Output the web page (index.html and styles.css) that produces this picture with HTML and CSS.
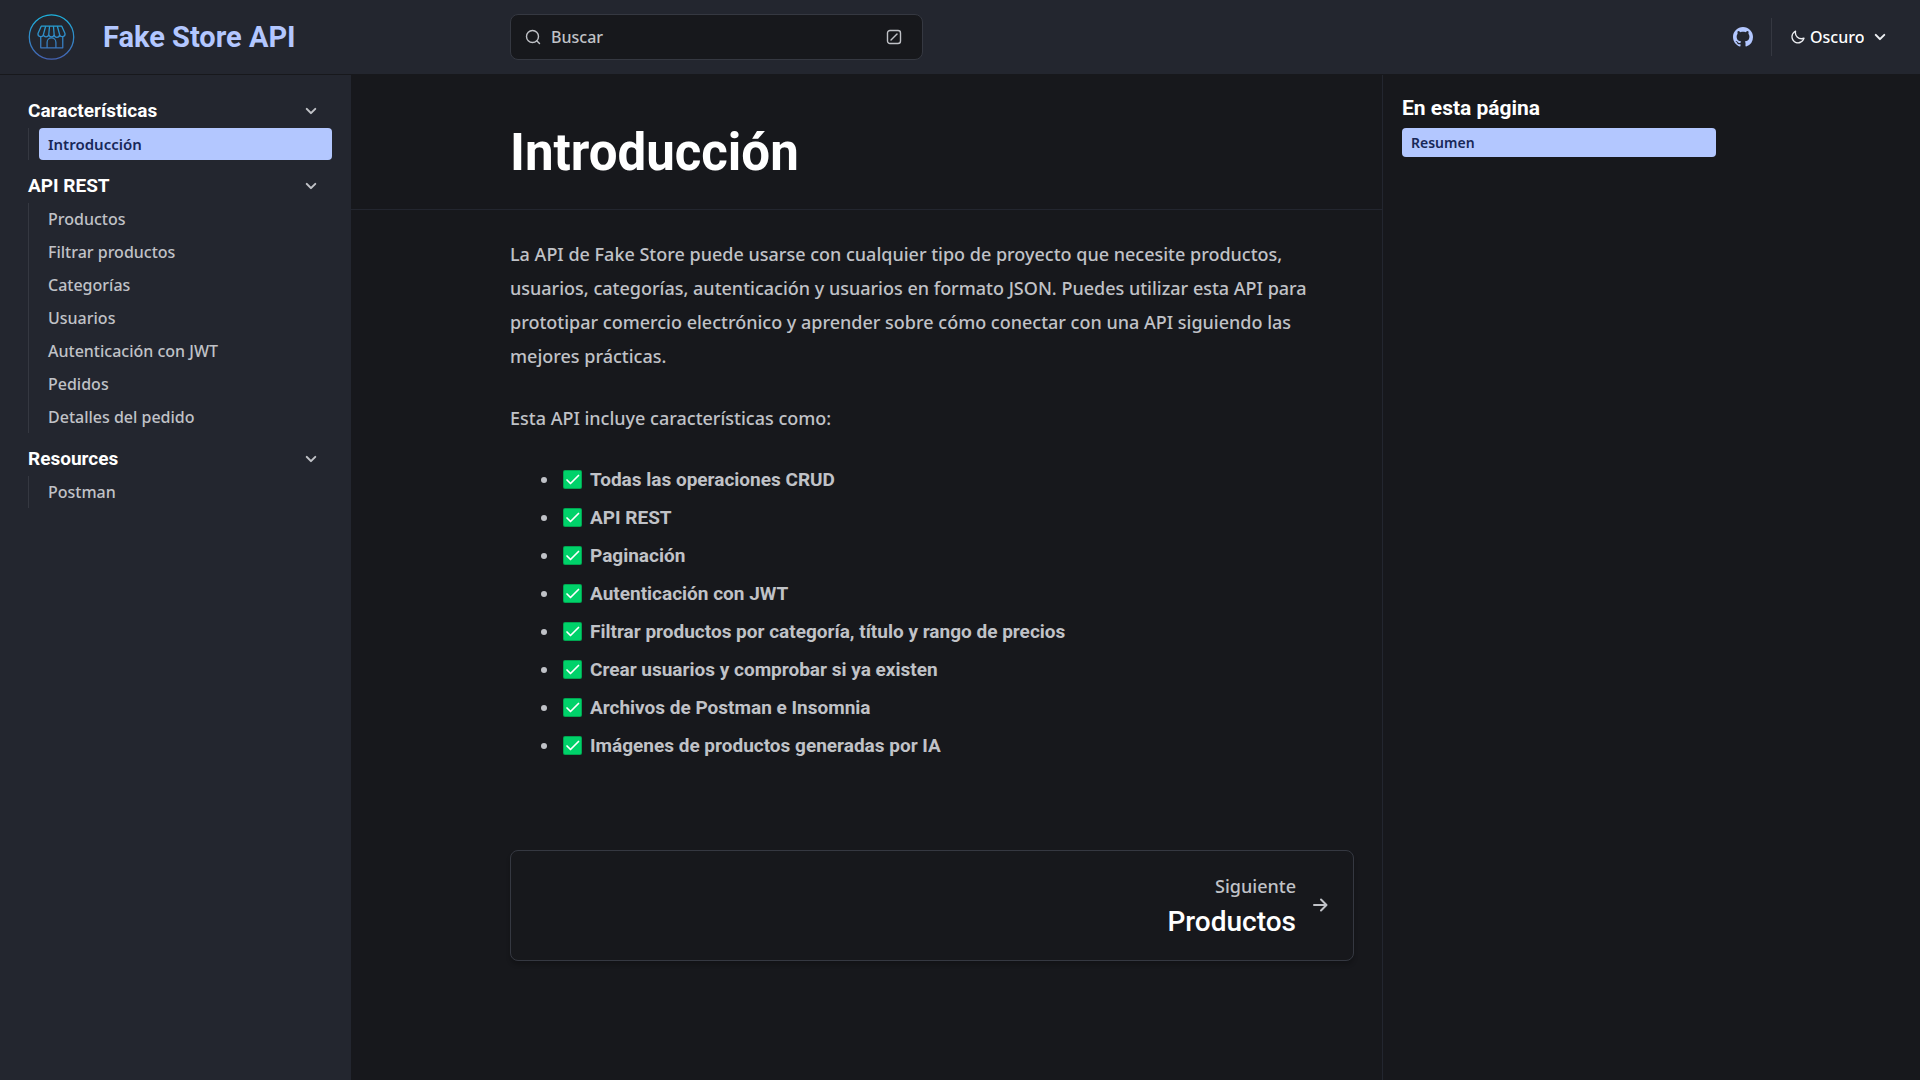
FILE: index.html
```html
<!DOCTYPE html>
<html lang="es">
<head>
<meta charset="utf-8">
<meta name="viewport" content="width=device-width, initial-scale=1">
<title>Introducción | Fake Store API</title>
<link rel="stylesheet" href="styles.css">
</head>
<body>
<svg class="sprite" aria-hidden="true">
  <symbol id="chevron" viewBox="0 0 24 24"><path d="M17 9.2a1 1 0 0 0-1.4 0L12 12.7 8.5 9.2A1 1 0 0 0 7 10.6l4.2 4.2a1 1 0 0 0 1.5 0l4.3-4.2a1 1 0 0 0 0-1.4Z"/></symbol>
  <symbol id="check" viewBox="0 0 19 19"><rect width="19" height="19" rx="2" fill="#00a651"/><rect x="1" y="1" width="17" height="17" rx="1" fill="#00d26a"/><path d="M4 10l3.500 3.500L15.500 5.500" fill="none" stroke="#fff" stroke-width="1.700" stroke-linecap="round" stroke-linejoin="round"/></symbol>
</svg>

<header class="header">
  <a class="site-title" href="#">
    <svg class="logo" viewBox="0 0 47 47" fill="none" aria-hidden="true">
      <defs><linearGradient id="logo-stroke" gradientUnits="userSpaceOnUse" x1="0" y1="0" x2="0" y2="47"><stop stop-color="#1cb5e0"/><stop offset="1" stop-color="#4560b0"/></linearGradient></defs>
      <g stroke="url(#logo-stroke)" stroke-width="1.300" stroke-linejoin="round">
        <circle cx="23.500" cy="23.500" r="22.700"/>
        <path d="M13 12.500h21l3.300 7.500a2.800 2.800 0 0 1-5.500 1 2.800 2.800 0 0 1-5.600 0 2.800 2.800 0 0 1-5.500 0 2.800 2.800 0 0 1-5.500 0 2.800 2.800 0 0 1-5.500-1L13 12.500Z"/>
        <path d="M17.500 12.500L15.200 21M21.500 12.500L20.700 21M25.500 12.500L26.200 21M29.500 12.500L31.800 21"/>
        <path d="M12.500 23v11.500H35V23M19 34.500V29a4.500 4.500 0 0 1 9 0v5.500"/>
      </g>
    </svg>
    <span>Fake Store API</span>
  </a>
  <button class="search" type="button">
    <svg width="16" height="16" viewBox="0 0 16 16" fill="none" stroke="currentColor" stroke-width="1.400" stroke-linecap="round" aria-hidden="true"><circle cx="7.500" cy="7.500" r="6"/><path d="M12 12l2.500 2.500"/></svg>
    <span class="search-label">Buscar</span>
    <svg width="16" height="16" viewBox="0 0 16 16" fill="none" stroke="currentColor" stroke-width="1.400" stroke-linecap="round" aria-hidden="true"><rect x="1.500" y="1.500" width="13" height="13" rx="2.500"/><path d="M5 11l6-6"/></svg>
  </button>
  <div class="header-end">
    <a class="github" href="#" aria-label="GitHub">
      <svg width="20" height="20" viewBox="0 0 16 16" fill="currentColor" aria-hidden="true"><path d="M8 0C3.580 0 0 3.580 0 8c0 3.540 2.290 6.530 5.470 7.590.4.070.55-.17.55-.38 0-.19-.01-.82-.01-1.490-2.010.37-2.530-.49-2.690-.94-.09-.23-.48-.94-.82-1.130-.28-.15-.68-.52-.01-.53.63-.01 1.080.58 1.230.82.72 1.210 1.870.87 2.330.66.07-.52.28-.87.51-1.070-1.780-.2-3.640-.89-3.640-3.950 0-.87.31-1.590.82-2.150-.08-.2-.36-1.020.08-2.120 0 0 .67-.21 2.200.82.640-.18 1.320-.27 2-.27s1.360.09 2 .27c1.530-1.040 2.200-.82 2.200-.82.44 1.100.16 1.920.08 2.120.51.56.82 1.270.82 2.150 0 3.070-1.870 3.750-3.650 3.950.29.25.54.73.54 1.480 0 1.070-.01 1.930-.01 2.200 0 .21.15.46.55.38A8.010 8.010 0 0 0 16 8c0-4.420-3.580-8-8-8Z"/></svg>
    </a>
    <label class="theme">
      <svg width="16" height="16" viewBox="0 0 24 24" fill="currentColor" aria-hidden="true"><path d="M21.640 13a1 1 0 0 0-1.050-.14 8.050 8.050 0 0 1-3.370.73 8.150 8.150 0 0 1-8.140-8.100 8.590 8.590 0 0 1 .25-2A1 1 0 0 0 8 2.360a10.140 10.140 0 1 0 14 11.690 1 1 0 0 0-.36-1.050Zm-9.500 6.690A8.140 8.140 0 0 1 7.080 5.220v.27a10.150 10.150 0 0 0 10.140 10.140 9.790 9.790 0 0 0 2.100-.22 8.110 8.110 0 0 1-7.180 4.320v-.04Z"/></svg>
      <select aria-label="Selecciona tema"><option>Oscuro</option><option>Claro</option><option>Automático</option></select>
      <svg class="chevron" aria-hidden="true"><use href="#chevron"/></svg>
    </label>
  </div>
</header>

<div class="layout">
  <nav class="sidebar" aria-label="Principal">
    <details open>
      <summary>Características<svg class="chevron" aria-hidden="true"><use href="#chevron"/></svg></summary>
      <ul><li><a class="current" href="#" aria-current="page">Introducción</a></li></ul>
    </details>
    <details open>
      <summary>API REST<svg class="chevron" aria-hidden="true"><use href="#chevron"/></svg></summary>
      <ul>
        <li><a href="#">Productos</a></li>
        <li><a href="#">Filtrar productos</a></li>
        <li><a href="#">Categorías</a></li>
        <li><a href="#">Usuarios</a></li>
        <li><a href="#">Autenticación con JWT</a></li>
        <li><a href="#">Pedidos</a></li>
        <li><a href="#">Detalles del pedido</a></li>
      </ul>
    </details>
    <details open>
      <summary>Resources<svg class="chevron" aria-hidden="true"><use href="#chevron"/></svg></summary>
      <ul><li><a href="#">Postman</a></li></ul>
    </details>
  </nav>

  <main class="main">
    <div class="panel title-panel"><div class="content"><h1>Introducción</h1></div></div>
    <div class="panel">
      <div class="content">
        <p>La API de Fake Store puede usarse con cualquier tipo de proyecto que necesite productos, usuarios, categorías, autenticación y usuarios en formato JSON. Puedes utilizar esta API para prototipar comercio electrónico y aprender sobre cómo conectar con una API siguiendo las mejores prácticas.</p>
        <p>Esta API incluye características como:</p>
        <ul class="features">
          <li><svg class="check" aria-hidden="true"><use href="#check"/></svg>Todas las operaciones CRUD</li>
          <li><svg class="check" aria-hidden="true"><use href="#check"/></svg>API REST</li>
          <li><svg class="check" aria-hidden="true"><use href="#check"/></svg>Paginación</li>
          <li><svg class="check" aria-hidden="true"><use href="#check"/></svg>Autenticación con JWT</li>
          <li><svg class="check" aria-hidden="true"><use href="#check"/></svg>Filtrar productos por categoría, título y rango de precios</li>
          <li><svg class="check" aria-hidden="true"><use href="#check"/></svg>Crear usuarios y comprobar si ya existen</li>
          <li><svg class="check" aria-hidden="true"><use href="#check"/></svg>Archivos de Postman e Insomnia</li>
          <li><svg class="check" aria-hidden="true"><use href="#check"/></svg>Imágenes de productos generadas por IA</li>
        </ul>
        <a class="next" href="#" rel="next">
          <span class="next-text">Siguiente<span class="next-title">Productos</span></span>
          <svg width="16" height="16" viewBox="0 0 16 16" fill="none" stroke="currentColor" stroke-width="2" stroke-linecap="round" stroke-linejoin="round" aria-hidden="true"><path d="M2 8h12M9 2.500L14.500 8 9 13.500"/></svg>
        </a>
      </div>
    </div>
  </main>

  <aside class="toc">
    <h2>En esta página</h2>
    <a href="#" aria-current="true">Resumen</a>
  </aside>
</div>
</body>
</html>
```
FILE: styles.css
```css
:root {
  --bg: #17181c;
  --bg-nav: #23262f;
  --hairline: #23262f;
  --line: #353841;
  --text: #c0c2c7;
  --accent: #b3c7ff;
  --on-accent: #182758;
  --body-font: "Noto Sans", sans-serif;
  --heading-font: Roboto, "Noto Sans", sans-serif;
  --sidebar: 351px;
  --gutter: 28px;
}

* { box-sizing: border-box; }

body {
  margin: 0;
  min-height: 100vh;
  display: flex;
  flex-direction: column;
  background: var(--bg);
  color: var(--text);
  font: 500 18px/34px var(--body-font);
}

a { color: inherit; text-decoration: none; }
ul { margin: 0; padding: 0; list-style: none; }
h1, h2, p { margin: 0; }
svg { flex: none; }
.sprite { display: none; }
.chevron { width: 24px; height: 24px; fill: currentColor; }

.header {
  display: flex;
  align-items: center;
  padding: 14px var(--gutter);
  background: var(--bg-nav);
  border-bottom: 1px solid var(--bg);
}

.site-title {
  width: 482px;
  display: flex;
  align-items: center;
  gap: 28px;
  color: var(--accent);
  font: 700 29px/46px var(--heading-font);
}
.logo { width: 47px; height: 46px; }

.search {
  width: 413px;
  height: 46px;
  display: flex;
  align-items: center;
  gap: 10px;
  padding: 0 20px 0 14px;
  border: 1px solid var(--line);
  border-radius: 8px;
  background: var(--bg);
  color: var(--text);
  font: 500 16px/24px var(--body-font);
}
.search-label { flex: 1; text-align: left; }

.header-end {
  margin-left: auto;
  display: flex;
  align-items: center;
  gap: 18px;
}
.github { display: flex; color: var(--accent); }
.theme {
  height: 38px;
  display: flex;
  align-items: center;
  gap: 4px;
  padding-left: 18px;
  border-left: 1px solid var(--line);
  color: #eceef2;
}
.theme select {
  width: 54px;
  padding: 0;
  border: 0;
  appearance: none;
  background: transparent;
  color: #fff;
  font: 500 16px/24px var(--body-font);
}

.layout {
  flex: 1;
  display: grid;
  grid-template-columns: var(--sidebar) minmax(0, 1031fr) minmax(0, 538fr);
}

.sidebar {
  display: flex;
  flex-direction: column;
  gap: 8px;
  padding: 18px 19px 28px var(--gutter);
  background: var(--bg-nav);
}
.sidebar summary {
  display: flex;
  align-items: center;
  justify-content: space-between;
  padding-right: 9px;
  color: #fff;
  font: 700 19px/35px var(--heading-font);
}
.sidebar summary .chevron { color: var(--text); }
.sidebar ul {
  display: flex;
  flex-direction: column;
  gap: 1px;
  padding-left: 10px;
  border-left: 1px solid var(--line);
}
.sidebar li a {
  display: block;
  padding: 0 9px;
  border-radius: 4px;
  font-size: 16px;
  line-height: 32px;
}
.sidebar .current {
  background: var(--accent);
  color: var(--on-accent);
  font-weight: 600;
  font-size: 15px;
}

.panel { padding: 27px 28px 56px; }
.title-panel {
  padding: 49px 28px 27px;
  border-bottom: 1px solid var(--hairline);
}
.content { max-width: 844px; margin-left: auto; }
h1 {
  color: #fff;
  font: 700 51px/58px var(--heading-font);
}
p { margin-bottom: 28px; }

.features {
  padding-left: 50px;
  display: flex;
  flex-direction: column;
  gap: 4px;
  list-style: disc;
  font-family: var(--heading-font);
  font-weight: 700;
  font-size: 19px;
}
.features li { padding-left: 3px; }
.check {
  width: 19px;
  height: 19px;
  margin-right: 8px;
  vertical-align: -3px;
}

.next {
  margin-top: 87px;
  display: flex;
  align-items: center;
  justify-content: flex-end;
  gap: 16px;
  padding: 18px 25px 19px 28px;
  border: 1px solid var(--line);
  border-radius: 8px;
  box-shadow: 0 4px 4px rgb(0 0 0 / 20%);
}
.next-text { text-align: right; }
.next-title {
  display: block;
  color: #fff;
  font: 500 28px/38px var(--heading-font);
}

.toc {
  padding: 14px 19px;
  border-left: 1px solid var(--hairline);
}
h2 {
  color: #fff;
  font: 700 21px/39px var(--heading-font);
}
.toc a {
  display: block;
  max-width: 314px;
  padding: 0 9px;
  border-radius: 4px;
  background: var(--accent);
  color: var(--on-accent);
  font-weight: 600;
  font-size: 14px;
  line-height: 29px;
}
```
